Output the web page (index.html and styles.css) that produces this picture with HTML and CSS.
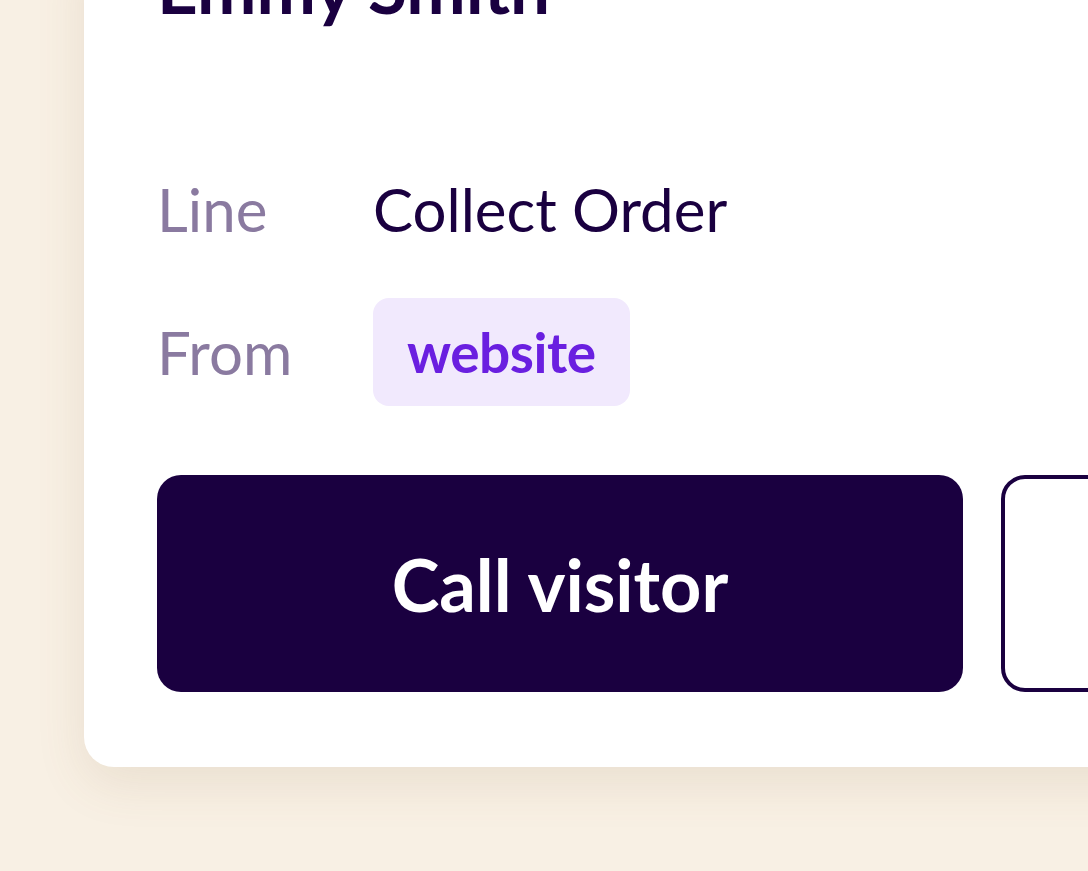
FILE: index.html
```html
<!DOCTYPE html>
<html lang="en">
<head>
    <meta charset="UTF-8">
    <meta name="viewport" content="width=device-width, initial-scale=1.0">
    <title>Visitor - Emmy Smith</title>
    <link rel="stylesheet" href="styles.css">
</head>
<body>
    <div class="visitor-card">
        <h1 class="visitor-name">Emmy Smith</h1>

        <div class="details">
            <div class="detail-row">
                <span class="detail-label">Line</span>
                <span class="detail-value">Collect Order</span>
            </div>
            <div class="detail-row">
                <span class="detail-label">From</span>
                <span class="source-badge">website</span>
            </div>
        </div>

        <div class="actions">
            <button class="btn btn-primary">Call visitor</button>
            <button class="btn btn-outline">Skip</button>
        </div>
    </div>
</body>
</html>
```

FILE: styles.css
```css
body {
    margin: 0;
    height: 871px;
    overflow: hidden;
    background: #f8f0e4;
    font-family: Lato, "Noto Sans", sans-serif;
    color: #1a0040;
}
.visitor-card {
    width: 1200px;
    margin: -60px 0 0 84px;
    padding: 0 0 75px 73px;
    background: #fff;
    border-radius: 0 0 0 30px;
    box-shadow: 0 16px 50px rgba(130, 100, 60, 0.12);
}
.visitor-name {
    margin: 0;
    font-size: 71px;
    font-weight: 700;
    line-height: 94px;
}
.details {
    margin-top: 139px;
}
.detail-row {
    display: grid;
    grid-template-columns: 216px auto;
    align-items: center;
    font-size: 60px;
}
.detail-row + .detail-row {
    margin-top: 53px;
}
.detail-label {
    color: #8a7aa0;
}
.detail-value {
    color: #1a0040;
}
.source-badge {
    justify-self: start;
    height: 108px;
    line-height: 108px;
    padding: 0 34px;
    border-radius: 16px;
    background: #f1e9fd;
    color: #6a1fe0;
    font-size: 55px;
    font-weight: 700;
    letter-spacing: -0.5px;
}
.actions {
    display: flex;
    gap: 38px;
    margin-top: 69px;
}
.btn {
    height: 217px;
    border-radius: 24px;
    font-family: inherit;
    font-size: 72px;
    font-weight: 700;
    cursor: pointer;
}
.btn-primary {
    width: 806px;
    background: #1a0040;
    color: #fff;
    border: none;
}
.btn-outline {
    width: 300px;
    background: #fff;
    color: transparent;
    border: 4px solid #1a0040;
}
```
